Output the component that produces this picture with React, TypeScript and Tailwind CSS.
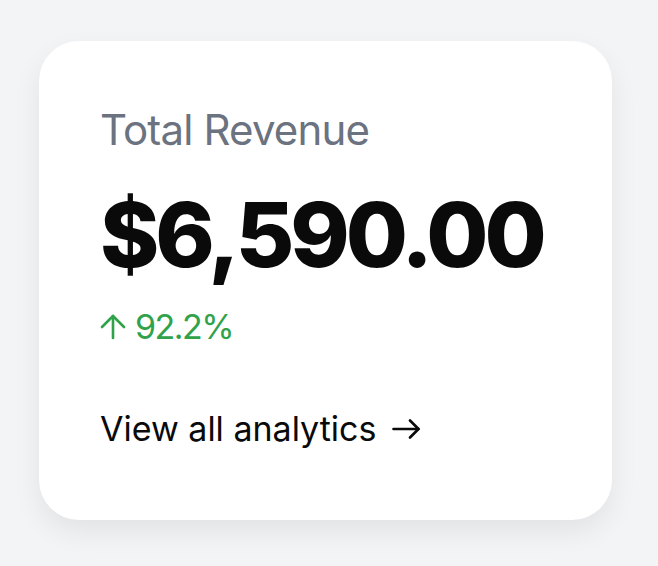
import React from "react";

function UpArrow() {
    return (
        <svg width="26" height="26" viewBox="0 0 26 26" fill="none" stroke="currentColor" strokeWidth="2.6" strokeLinecap="round" strokeLinejoin="round">
            <path d="M13 24V2" />
            <path d="M2 13 13 2l11 11" />
        </svg>
    );
}

function RightArrow() {
    return (
        <svg width="28" height="20" viewBox="0 0 28 20" fill="none" stroke="currentColor" strokeWidth="2.6" strokeLinecap="round" strokeLinejoin="round">
            <path d="M1.5 10h25" />
            <path d="M18 1.5l8.5 8.5-8.5 8.5" />
        </svg>
    );
}

export default function App() {
    return (
        <div className="min-h-screen bg-[#f3f4f6] pt-[41px] pl-[39px]" style={{ fontFamily: "Inter, 'Noto Sans', sans-serif" }}>
            <div className="w-[573px] h-[479px] bg-white rounded-[40px] shadow-[0_12px_28px_rgba(0,0,0,0.07)] pl-[61px] pt-[68px] flex flex-col">
                <h2 className="text-[42px] leading-none text-[#6b7280] tracking-[-0.02em]">Total Revenue</h2>
                <div className="mt-[39px] text-[90px] leading-none font-extrabold text-[#0a0a0a] tracking-[-0.045em]">$6,590.00</div>
                <div className="mt-[30px] flex items-center gap-[9px] text-[34px] leading-none text-[#30a24a] tracking-[-0.045em]">
                    <UpArrow />
                    <span>92.2%</span>
                </div>
                <a href="#" className="mt-[68px] flex items-center gap-[16px] text-[34px] leading-none text-[#0a0a0a]">
                    <span>View all analytics</span>
                    <RightArrow />
                </a>
            </div>
        </div>
    );
}
